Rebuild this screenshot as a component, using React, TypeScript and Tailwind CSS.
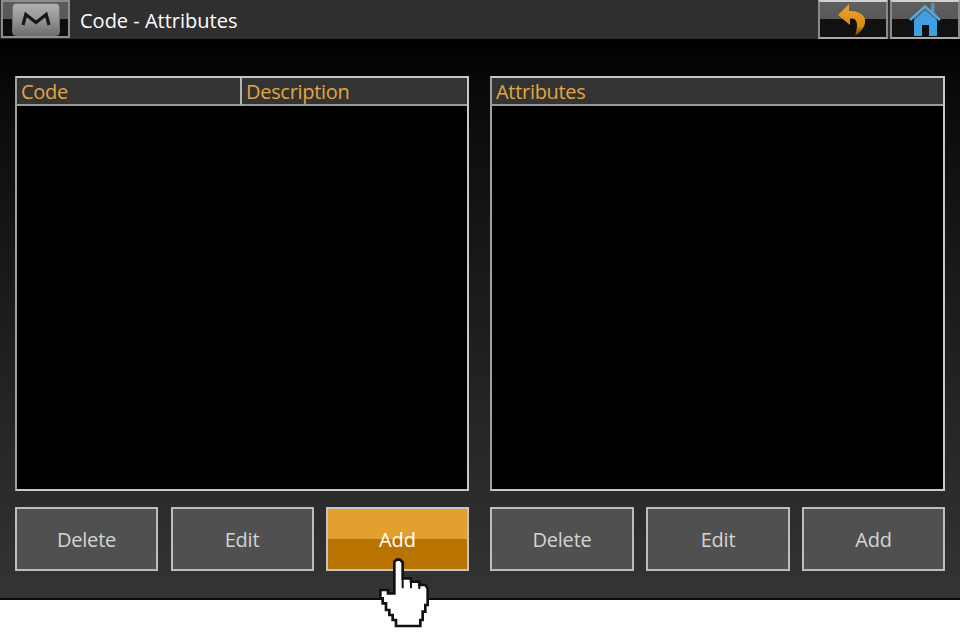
import React from "react";

const font = { fontFamily: '"Open Sans", "Noto Sans", sans-serif' };

function Btn({ label, active }: { label: string; active?: boolean }) {
  return active ? (
    <button className="relative h-[64px] border-2 border-[#c4c4c4] bg-[linear-gradient(#e3a02f_0%,#e3a02f_50%,#b87300_50%,#b87300_100%)] pt-[1px] text-[20px] tracking-[-0.1px] text-white">
      {label}
    </button>
  ) : (
    <button className="h-[64px] border-2 border-[#bdbdbd] bg-[#505050] pt-[1px] text-[20px] font-medium tracking-[-0.2px] text-[#d4d4d4]">
      {label}
    </button>
  );
}

function HeaderCell({ label, className }: { label: string; className: string }) {
  return (
    <div className={`flex items-center border-b-2 border-[#9a9a9a] bg-[#333333] pl-1 pt-[1px] text-[20px] tracking-[-0.3px] text-[#e2a640] ${className}`}>
      {label}
    </div>
  );
}

function TopBtn({ children }: { children: React.ReactNode }) {
  return (
    <div className="relative h-[39px] w-[70px] border-2 border-t-[#d0d0d0] border-x-[#8a8a8a] border-b-[#a8a8a8] bg-[linear-gradient(#606060_0%,#585858_48%,#111111_48%,#111111_100%)]">
      {children}
    </div>
  );
}

export default function App() {
  return (
    <div className="relative flex h-[637px] w-[960px] flex-col overflow-hidden bg-white" style={font}>
      <header className="flex h-[39px] shrink-0 items-start bg-[#2f2f2f]">
        <div className="ml-[1px] flex h-[38px] w-[69px] items-center justify-center border-2 border-[#8c8c8c] bg-[linear-gradient(#5a5a5a_0%,#5a5a5a_50%,#0d0d0d_50%,#0d0d0d_100%)]">
          <div className="flex h-[33px] w-[48px] items-center justify-center rounded-[4px] border border-[#707070] bg-[linear-gradient(#b0b0b0_0%,#929292_55%,#6e6e6e_100%)]">
            <svg width="30" height="14" viewBox="0 0 30 14">
              <path d="M2 13 L4.8 2.5 L15 10.5 L25.2 2.5 L28 13" fill="none" stroke="#161616" strokeWidth="3.2" strokeMiterlimit="3" />
            </svg>
          </div>
        </div>
        <div className="ml-[10px] mt-[7px] text-[20px] leading-[27px] text-white">Code - Attributes</div>
        <div className="ml-auto flex gap-[2px]">
          <TopBtn>
            <svg className="absolute left-[17px] top-[1px]" width="32" height="34" viewBox="0 0 32 34">
              <defs>
                <linearGradient id="arrow" x1="0" y1="0" x2="0" y2="1">
                  <stop offset="0" stopColor="#eea62a" />
                  <stop offset="0.7" stopColor="#d98a12" />
                  <stop offset="1" stopColor="#5a3806" />
                </linearGradient>
              </defs>
              <path d="M12 1 L1 12 L13 22 L13 15 C20 15 22 20 18 33 C27 27 30 19 27 14 C24 9 18 8 12 8 Z" fill="url(#arrow)" />
            </svg>
          </TopBtn>
          <TopBtn>
            <svg className="absolute left-[17px] top-[1px]" width="34" height="34" viewBox="0 0 34 34">
              <rect x="22" y="0" width="3.5" height="10" fill="#4f93b8" />
              <path d="M1 17 L16 3.5 L31 17" fill="none" stroke="#5aa6d8" strokeWidth="2.5" />
              <path d="M5 17 L16 7 L28 17 V33 H20 V22 H13 V33 H5 Z" fill="#3f9fe0" />
            </svg>
          </TopBtn>
        </div>
      </header>

      <main className="h-[559px] shrink-0 bg-[linear-gradient(#000000_0%,#0a0a0a_10%,#343434_100%)] px-[15px] pt-[37px]">
        <div className="grid grid-cols-[454px_455px] gap-[21px]">
          <section>
            <div className="h-[415px] border-2 border-[#c8c8c8] border-l-[#a0a0a0] bg-black">
              <div className="flex h-[28px]">
                <HeaderCell label="Code" className="w-[225px] border-r-2 border-r-[#b4b4b4]" />
                <HeaderCell label="Description" className="flex-1" />
              </div>
            </div>
            <div className="mt-[16px] grid grid-cols-[143px_143px_143px] justify-between">
              <Btn label="Delete" />
              <Btn label="Edit" />
              <Btn label="Add" active />
            </div>
          </section>
          <section>
            <div className="h-[415px] border-2 border-[#c8c8c8] border-l-[#a0a0a0] bg-black">
              <div className="flex h-[28px]">
                <HeaderCell label="Attributes" className="flex-1" />
              </div>
            </div>
            <div className="mt-[16px] grid grid-cols-[144px_144px_143px] gap-[12px]">
              <Btn label="Delete" />
              <Btn label="Edit" />
              <Btn label="Add" />
            </div>
          </section>
        </div>
      </main>
      <div className="h-[2px] shrink-0 bg-[#0c0c0c]" />

      <svg className="absolute left-[372px] top-[555px]" width="70" height="80" viewBox="0 0 210 240">
        <path
          d="M67 20 L74 14 L84 14 L92 22 L92 70 L117 70 L117 80 L142 80 L142 90 L160 90 L167 100 L167 150 L160 150 L160 170 L152 170 L152 195 L145 195 L145 213 L72 213 L72 195 L62 195 L62 180 L52 180 L52 165 L42 165 L42 145 L32 145 L32 130 L25 130 L25 105 L48 105 L48 115 L67 115 Z"
          fill="#ffffff"
          stroke="#111111"
          strokeWidth="8"
        />
        <path d="M92 70 V100 M117 80 V100 M142 90 V102" fill="none" stroke="#111111" strokeWidth="6" />
      </svg>
    </div>
  );
}
